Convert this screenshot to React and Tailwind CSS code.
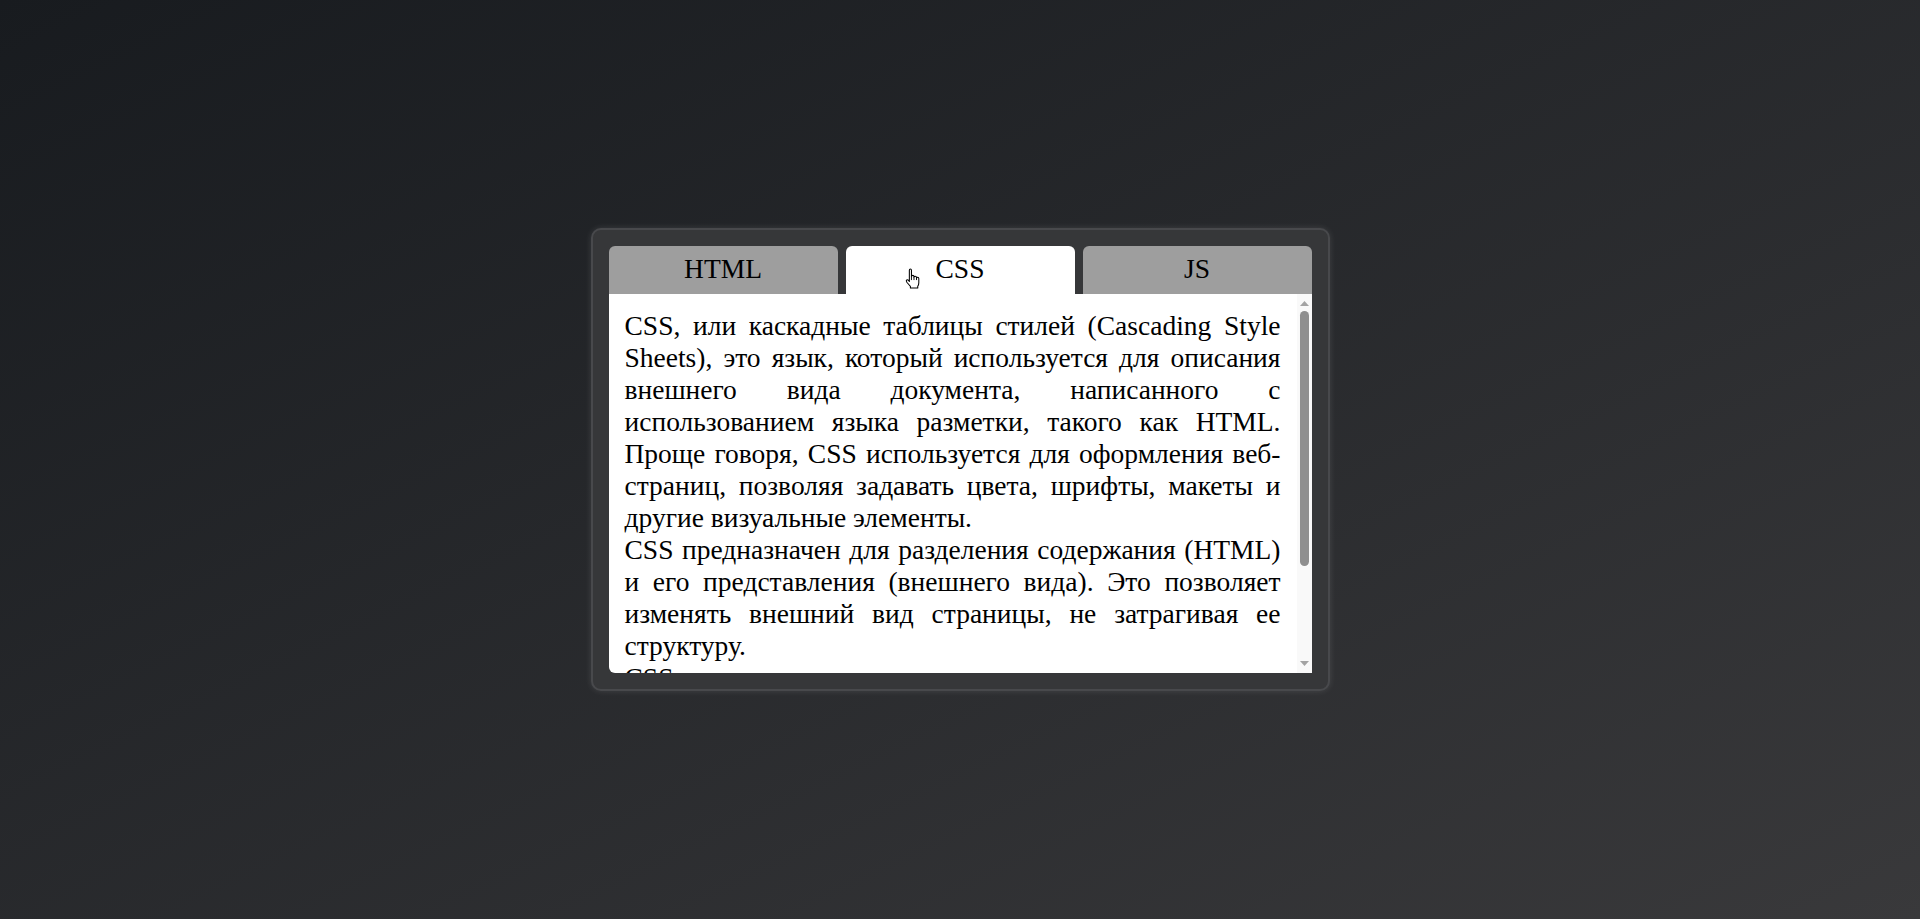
import React from "react";

function Hand() {
  return (
    <svg width="17" height="21" viewBox="0 0 16 20" className="absolute left-[58px] top-[22px]">
      <path
        d="M5 2.2 Q5 1 6 1 Q7 1 7 2.2 V8 Q7.1 7 8.2 7 Q9.4 7 9.4 8.2 V8.7 Q9.7 7.9 10.6 7.9 Q11.8 7.9 11.8 9.1 V9.5 Q12.1 8.9 12.9 8.9 Q14 8.9 14 10.1 V14 Q14 16 13 17.4 V19 H6 V17.4 Q4.6 16 2.6 13.6 Q1.6 12.2 2.5 11.4 Q3.4 10.8 4.2 11.8 L5 12.9 Z"
        fill="#fff"
        stroke="#000"
        strokeWidth="1"
        strokeLinejoin="round"
      />
      <path d="M7 8 V11.5 M9.4 8.7 V11.5 M11.8 9.5 V11.5" stroke="#000" strokeWidth="0.9" fill="none" />
    </svg>
  );
}

export default function App() {
  const tabs = ["HTML", "CSS", "JS"];
  return (
    <div
      className="w-full h-[919px] flex items-center justify-center bg-linear-to-br from-[#181b1f] to-[#39393b]"
      style={{ fontFamily: '"Liberation Serif", "Times New Roman", serif' }}
    >
      <div className="w-[739px] rounded-[10px] border-2 border-[#48494c] bg-[#363739] p-4 shadow-[0_0_6px_rgba(255,255,255,0.12)]">
        <div className="flex gap-2 h-12">
          {tabs.map((t) => (
            <div
              key={t}
              className={
                "relative flex-1 flex items-center justify-center rounded-t-[6px] text-[27.5px] leading-[normal] text-black pb-[2px] " +
                (t === "CSS" ? "bg-white" : "bg-[#9e9e9e]")
              }
            >
              {t === "CSS" && <Hand />}
              {t}
            </div>
          ))}
        </div>
        <div className="h-[379px] flex bg-white rounded-bl-[6px] overflow-hidden">
          <div className="flex-1 overflow-hidden p-4 text-[27.5px] leading-[normal] text-black text-justify">
            <div>
              CSS, или каскадные таблицы стилей (Cascading Style Sheets), это язык, который используется для описания
              внешнего вида документа, написанного с использованием языка разметки, такого как HTML. Проще говоря, CSS
              используется для оформления веб-страниц, позволяя задавать цвета, шрифты, макеты и другие визуальные
              элементы.
            </div>
            <div>
              CSS предназначен для разделения содержания (HTML) и его представления (внешнего вида). Это позволяет
              изменять внешний вид страницы, не затрагивая ее структуру.
            </div>
            <div>
              CSS можно писать прямо в коде страницы или хранить в отдельном документе, что упрощает поддержку сайта.
            </div>
          </div>
          <div className="w-[15px] shrink-0 bg-[#f9f9f9] flex flex-col items-center">
            <svg width="9" height="5" viewBox="0 0 9 5" className="mt-[7px]">
              <path d="M0 5 L4.5 0 L9 5 Z" fill="#a3a3a3" />
            </svg>
            <div className="mt-[5px] w-[9px] h-[255px] rounded-full bg-[#8f8f8f]" />
            <div className="flex-1" />
            <svg width="9" height="5" viewBox="0 0 9 5" className="mb-[7px]">
              <path d="M0 0 L4.5 5 L9 0 Z" fill="#a3a3a3" />
            </svg>
          </div>
        </div>
      </div>
    </div>
  );
}
